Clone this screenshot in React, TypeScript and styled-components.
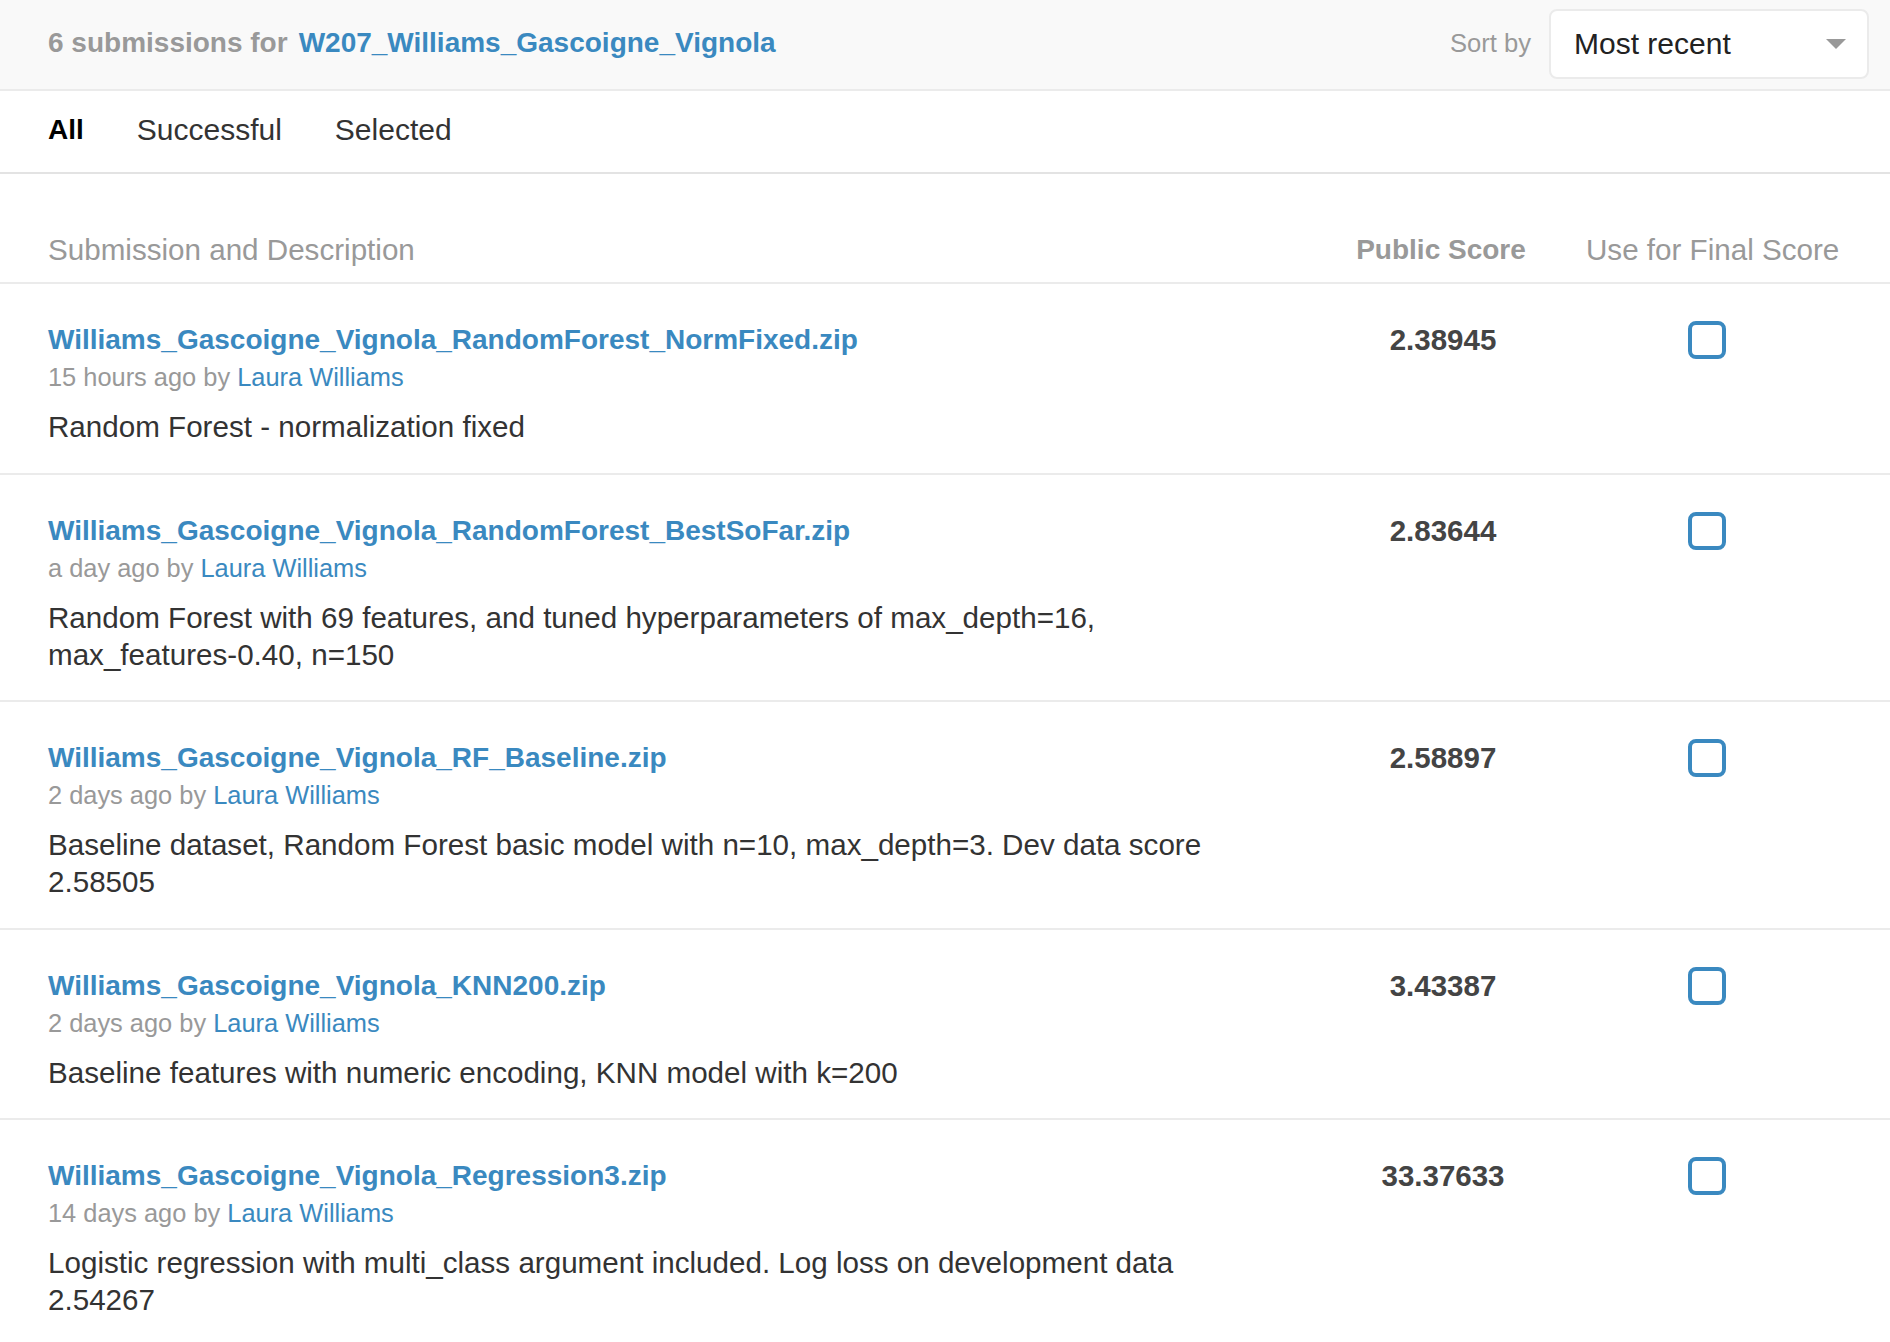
import React from 'react';
import styled, { createGlobalStyle } from 'styled-components';

const GlobalStyle = createGlobalStyle`
  html, body {
    margin: 0;
    padding: 0;
    background: #ffffff;
  }
  body {
    font-family: "Liberation Sans", Arial, sans-serif;
    color: #333;
  }
  * {
    box-sizing: border-box;
  }
`;

const BLUE = '#3a89c0';

const HeaderBar = styled.div`
  display: flex;
  align-items: center;
  justify-content: space-between;
  height: 91px;
  padding: 0 21px 2px 48px;
  background-color: #f9f9f9;
  border-bottom: 2px solid #ebebeb;
`;

const Count = styled.div`
  font-size: 28px;
  font-weight: 700;
  color: #999;
  margin-bottom: 2px;
  a {
    color: ${BLUE};
    text-decoration: none;
    margin-left: 11px;
  }
`;

const SortGroup = styled.div`
  display: flex;
  align-items: center;
  gap: 18px;
`;

const SortLabel = styled.span`
  font-size: 25.6px;
  color: #999;
`;

const Select = styled.div`
  display: flex;
  align-items: center;
  justify-content: space-between;
  width: 320px;
  height: 70px;
  padding: 0 21px 0 23px;
  background: #fff;
  border: 2px solid #ebebeb;
  border-radius: 8px;
  font-size: 30px;
  color: #222;
`;

const Caret = styled.span`
  width: 0;
  height: 0;
  border-left: 10px solid transparent;
  border-right: 10px solid transparent;
  border-top: 10px solid #999;
`;

const TabBar = styled.div`
  display: flex;
  gap: 53px;
  padding: 21px 48px 24px;
  border-bottom: 2px solid #e3e3e3;
`;

const Tab = styled.div<{ $active?: boolean }>`
  line-height: 36px;
  font-size: ${p => (p.$active ? '28px' : '30px')};
  font-weight: ${p => (p.$active ? 700 : 400)};
  color: ${p => (p.$active ? '#000' : '#333')};
`;

const Grid = styled.div`
  display: grid;
  grid-template-columns: 1fr 230px 252px;
  column-gap: 30px;
  padding-left: 48px;
  padding-right: 52px;
`;

const HeadRow = styled(Grid)`
  padding-top: 57px;
  padding-bottom: 13px;
  border-bottom: 2px solid #ebebeb;
  line-height: 38px;
`;

const HeadCell = styled.div<{ $bold?: boolean; $center?: boolean }>`
  font-size: ${p => (p.$bold ? '28px' : '29.6px')};
  font-weight: ${p => (p.$bold ? 700 : 400)};
  color: #999;
  text-align: ${p => (p.$center ? 'center' : 'left')};
  white-space: nowrap;
`;

const Row = styled(Grid)`
  padding-top: 38px;
  padding-bottom: 27.5px;
  border-bottom: 2px solid #ebebeb;
`;

const Info = styled.div`
  display: flex;
  flex-direction: column;
`;

const Title = styled.a`
  font-size: 28px;
  font-weight: 700;
  line-height: 36px;
  color: ${BLUE};
  text-decoration: none;
`;

const Meta = styled.div`
  font-size: 25.4px;
  line-height: 38px;
  color: #999;
  a {
    color: ${BLUE};
    text-decoration: none;
  }
`;

const Desc = styled.div`
  max-width: 1200px;
  margin-top: 12px;
  font-size: 29.6px;
  line-height: 37px;
  color: #333;
`;

const Score = styled.div`
  text-align: center;
  font-size: 29.5px;
  font-weight: 700;
  line-height: 36px;
  color: #444;
  padding-left: 4px;
`;

const CheckCell = styled.div`
  display: flex;
  justify-content: center;
  height: 36px;
  align-items: center;
  padding-right: 10px;
`;

const Checkbox = styled.span`
  display: block;
  width: 38px;
  height: 38px;
  border: 4px solid ${BLUE};
  border-radius: 8px;
  background: #fff;
`;

type Submission = {
  file: string;
  when: string;
  score: string;
  desc: string;
};

const submissions: Submission[] = [
  {
    file: 'Williams_Gascoigne_Vignola_RandomForest_NormFixed.zip',
    when: '15 hours ago',
    score: '2.38945',
    desc: 'Random Forest - normalization fixed',
  },
  {
    file: 'Williams_Gascoigne_Vignola_RandomForest_BestSoFar.zip',
    when: 'a day ago',
    score: '2.83644',
    desc: 'Random Forest with 69 features, and tuned hyperparameters of max_depth=16, max_features-0.40, n=150',
  },
  {
    file: 'Williams_Gascoigne_Vignola_RF_Baseline.zip',
    when: '2 days ago',
    score: '2.58897',
    desc: 'Baseline dataset, Random Forest basic model with n=10, max_depth=3. Dev data score 2.58505',
  },
  {
    file: 'Williams_Gascoigne_Vignola_KNN200.zip',
    when: '2 days ago',
    score: '3.43387',
    desc: 'Baseline features with numeric encoding, KNN model with k=200',
  },
  {
    file: 'Williams_Gascoigne_Vignola_Regression3.zip',
    when: '14 days ago',
    score: '33.37633',
    desc: 'Logistic regression with multi_class argument included. Log loss on development data 2.54267',
  },
];

const App = () => {
  return (
    <>
      <GlobalStyle />
      <HeaderBar>
        <Count>
          6 submissions for<a href="#">W207_Williams_Gascoigne_Vignola</a>
        </Count>
        <SortGroup>
          <SortLabel>Sort by</SortLabel>
          <Select>
            <span>Most recent</span>
            <Caret />
          </Select>
        </SortGroup>
      </HeaderBar>
      <TabBar>
        <Tab $active>All</Tab>
        <Tab>Successful</Tab>
        <Tab>Selected</Tab>
      </TabBar>
      <HeadRow>
        <HeadCell>Submission and Description</HeadCell>
        <HeadCell $bold $center>Public Score</HeadCell>
        <HeadCell $center>Use for Final Score</HeadCell>
      </HeadRow>
      {submissions.map(s => (
        <Row key={s.file}>
          <Info>
            <Title href="#">{s.file}</Title>
            <Meta>
              {s.when} by <a href="#">Laura Williams</a>
            </Meta>
            <Desc>{s.desc}</Desc>
          </Info>
          <Score>{s.score}</Score>
          <CheckCell>
            <Checkbox />
          </CheckCell>
        </Row>
      ))}
    </>
  );
};

export default App;
